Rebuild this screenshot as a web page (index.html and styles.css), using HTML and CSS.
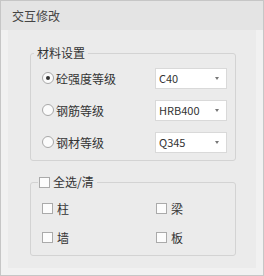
FILE: index.html
```html
<!DOCTYPE html>
<html lang="zh">
<head>
    <meta charset="UTF-8">
    <title>交互修改</title>
    <link rel="stylesheet" href="styles.css">
</head>
<body>

<div class="panel">
    <!-- ===== HEADER ===== -->
    <div class="panel-header">交互修改</div>

    <div class="panel-body">
        <div class="panel-inner">
            <!-- ===== MATERIAL ===== -->
            <fieldset class="group group-material">
                <legend>材料设置</legend>
                <div class="mat-row">
                    <label class="radio-label"><span class="radio checked"></span>砼强度等级</label>
                    <div class="select">C40<span class="caret"></span></div>
                </div>
                <div class="mat-row">
                    <label class="radio-label"><span class="radio"></span>钢筋等级</label>
                    <div class="select">HRB400<span class="caret"></span></div>
                </div>
                <div class="mat-row">
                    <label class="radio-label"><span class="radio"></span>钢材等级</label>
                    <div class="select">Q345<span class="caret"></span></div>
                </div>
            </fieldset>

            <!-- ===== MEMBERS ===== -->
            <fieldset class="group group-members">
                <legend><span class="check"></span>全选/清</legend>
                <div class="member-grid">
                    <label class="check-label"><span class="check"></span>柱</label>
                    <label class="check-label"><span class="check"></span>梁</label>
                    <label class="check-label"><span class="check"></span>墙</label>
                    <label class="check-label"><span class="check"></span>板</label>
                </div>
            </fieldset>
        </div>
    </div>
</div>

</body>
</html>
```

FILE: styles.css
```css
:root {
    --text: #333333;
    --border: #d3d3d3;
    --font-family: "Noto Sans CJK SC", "Noto Sans", sans-serif;
}
body {
    margin: 0;
    font-family: var(--font-family);
    font-size: 12px;
    color: var(--text);
}
.panel {
    width: 264px;
    height: 276px;
    box-sizing: border-box;
    border: 1px solid #c6c6c6;
    background: #f1f1f1;
    display: flex;
    flex-direction: column;
}
.panel-header {
    height: 29px;
    line-height: 29px;
    padding-left: 11px;
    background: #e4e4e4;
    color: #444;
}
.panel-body {
    flex: 1;
    padding: 0 7px 7px 7px;
}
.panel-inner {
    height: 100%;
    box-sizing: border-box;
    padding: 15px 0 0 22px;
    background: #ebebeb;
}
.group {
    box-sizing: border-box;
    width: 206px;
    margin: 0;
    border: 1px solid var(--border);
    border-radius: 3px;
}
.group legend {
    line-height: 16px;
    display: flex;
    align-items: center;
}
.group-material {
    padding: 1px 3px 2px 3px;
}
.group-material legend {
    padding: 0 3px;
}
.group-members {
    margin-top: 13px;
    padding: 4px 3px 3px 7px;
}
.group-members legend {
    padding: 0 3px 0 1px;
}
.group-members legend .check {
    margin-right: 3px;
}

/* material rows */
.mat-row {
    display: flex;
    align-items: center;
    height: 32px;
    margin-left: 8px;
}
.radio-label {
    width: 113px;
    display: flex;
    align-items: center;
}
.radio {
    width: 12px;
    height: 12px;
    box-sizing: border-box;
    border: 1px solid #a8a8a8;
    border-radius: 50%;
    background: #fbfbfb;
    margin-right: 2px;
    display: flex;
    align-items: center;
    justify-content: center;
}
.radio.checked::after {
    content: "";
    width: 4px;
    height: 4px;
    border-radius: 50%;
    background: #333;
}
.select {
    width: 72px;
    height: 21px;
    box-sizing: border-box;
    border: 1px solid #d9d9d9;
    background: #fff;
    padding: 0 7px 0 3px;
    font-size: 11px;
    display: flex;
    align-items: center;
    justify-content: space-between;
}
.caret {
    width: 0;
    height: 0;
    border-left: 2.5px solid transparent;
    border-right: 2.5px solid transparent;
    border-top: 3px solid #777;
}

/* member checkboxes */
.member-grid {
    display: grid;
    grid-template-columns: 114px auto;
    grid-auto-rows: 29px;
    margin-left: 4px;
}
.check-label {
    display: flex;
    align-items: center;
}
.check {
    width: 11px;
    height: 11px;
    box-sizing: border-box;
    border: 1px solid #aaa;
    background: #fcfcfc;
    margin-right: 4px;
}
```
